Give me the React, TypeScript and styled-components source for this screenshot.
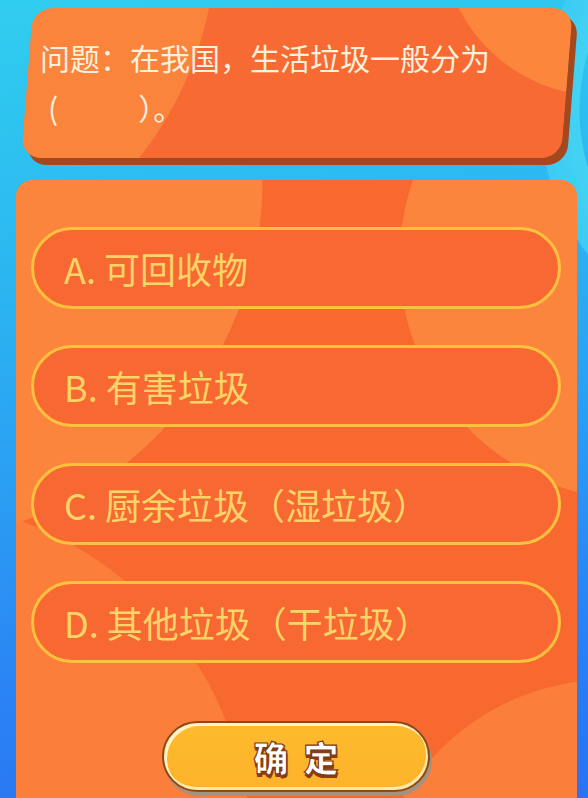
import styled, { createGlobalStyle } from "styled-components"

const GlobalStyle = createGlobalStyle`
  html, body {
    margin: 0;
    padding: 0;
  }
  body {
    font-family: "Noto Sans CJK SC", "Noto Sans", sans-serif;
    background: #2db4f1;
  }
`

const options = [
  "A. 可回收物",
  "B. 有害垃圾",
  "C. 厨余垃圾（湿垃圾）",
  "D. 其他垃圾（干垃圾）",
]

const App = () => {
  return (
    <Page>
      <GlobalStyle />
      <QuestionCard>
        <QuestionText>
          问题：在我国，生活垃圾一般分为
          <br />
          <OpenParen>(</OpenParen>
          <Blank />
          ）。
        </QuestionText>
      </QuestionCard>

      <AnswerPanel>
        <OptionList>
          {options.map((label) => (
            <OptionButton key={label}>{label}</OptionButton>
          ))}
        </OptionList>
        <ConfirmRow>
          <ConfirmButton>确定</ConfirmButton>
        </ConfirmRow>
      </AnswerPanel>
    </Page>
  )
}

export default App

const Page = styled.div`
  width: 588px;
  height: 798px;
  overflow: hidden;
  padding-top: 8px;
  box-sizing: border-box;
  background:
    radial-gradient(circle at 780px 110px, transparent 200px, #44d2f3 201px, #3ccbf3 240px, transparent 241px),
    linear-gradient(172deg, #31cdef 0%, #2cbcf0 25%, #2b9ff3 55%, #2a82f4 80%, #2a72f3 100%);
`

const QuestionCard = styled.div`
  margin-left: 27px;
  width: 540px;
  height: 150px;
  border-radius: 20px;
  transform: skewX(-4.5deg);
  background:
    radial-gradient(circle at 580px -90px, #fb863c 178px, transparent 179px),
    radial-gradient(circle at -150px -40px, #fb843c 328px, transparent 329px),
    #f86a33;
  box-shadow: 6px 7px 0 #a4481f;
`

const QuestionText = styled.div`
  transform: skewX(4.5deg);
  padding: 24px 0 0 12px;
  font-size: 30px;
  line-height: 50px;
  color: #fdf0dc;
`

const OpenParen = styled.span`
  margin-left: 8px;
`

const Blank = styled.span`
  display: inline-block;
  width: 80px;
`

const AnswerPanel = styled.div`
  margin: 22px 11px 0 16px;
  height: 640px;
  border-radius: 16px 16px 0 0;
  padding: 47px 16px 0 15px;
  box-sizing: border-box;
  background:
    radial-gradient(circle at -116px 0px, #fb853c 362px, transparent 363px),
    radial-gradient(circle at 624px 80px, #fb853c 240px, transparent 241px),
    radial-gradient(circle at -116px 670px, #fb7f3a 350px, transparent 351px),
    radial-gradient(circle at 594px 740px, #fb7f3a 240px, transparent 241px),
    #f8692f;
`

const OptionList = styled.div`
  display: flex;
  flex-direction: column;
  gap: 36px;
`

const OptionButton = styled.div`
  height: 82px;
  box-sizing: border-box;
  border: 3.5px solid #fec03f;
  border-radius: 41px;
  background: #f86832;
  display: flex;
  align-items: center;
  padding-left: 30px;
  font-size: 36px;
  color: #fdd468;
`

const ConfirmRow = styled.div`
  display: flex;
  justify-content: center;
  padding-top: 58px;
`

const ConfirmButton = styled.div`
  width: 268px;
  height: 71px;
  box-sizing: border-box;
  border: 2px solid #8a4a1c;
  border-radius: 36px;
  background: linear-gradient(180deg, #fdbb2c 0%, #fdb22a 100%);
  box-shadow: inset 2px 2px 0 1px #fff3c6, inset -1px -2px 0 1px #fde8a8, 2px 4px 0 #a39282;
  display: flex;
  align-items: center;
  justify-content: center;
  font-size: 35px;
  font-weight: 900;
  letter-spacing: 15px;
  padding-left: 15px;
  color: #ffffff;
  -webkit-text-stroke: 1.2px #7c3810;
  text-shadow: 0 3px 0 #8a3d12, 1px 3px 0 #8a3d12;
`
